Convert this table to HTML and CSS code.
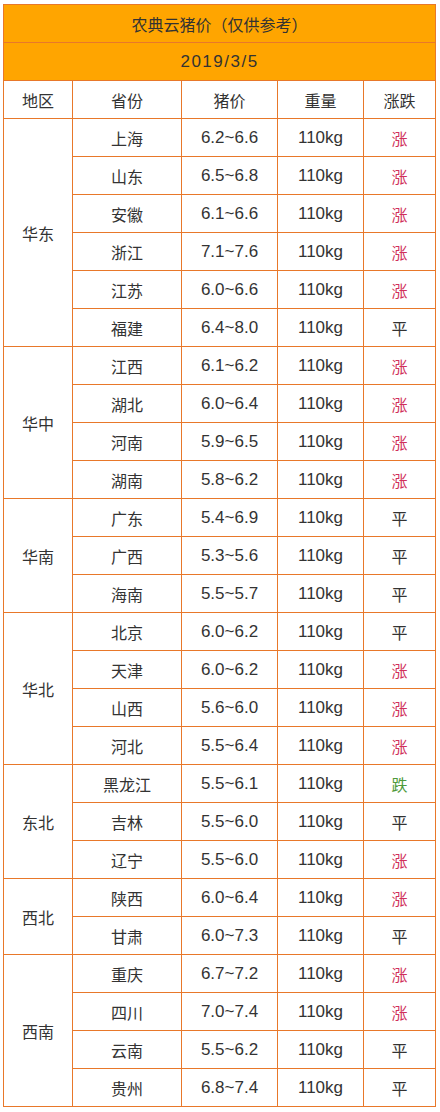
FILE: index.html
```html
<!DOCTYPE html>
<html lang="zh">
<head>
<meta charset="utf-8">
<link rel="stylesheet" href="styles.css">
</head>
<body>
<table class="price">
<colgroup><col class="c1"><col class="c2"><col class="c3"><col class="c4"><col class="c5"></colgroup>
<tr class="band"><td colspan="5">农典云猪价（仅供参考）</td></tr>
<tr class="band date"><td colspan="5">2019/3/5</td></tr>
<tr class="head"><td>地区</td><td>省份</td><td>猪价</td><td>重量</td><td>涨跌</td></tr>
<tr><td rowspan="6">华东</td><td>上海</td><td>6.2~6.6</td><td>110kg</td><td class="up">涨</td></tr>
<tr><td>山东</td><td>6.5~6.8</td><td>110kg</td><td class="up">涨</td></tr>
<tr><td>安徽</td><td>6.1~6.6</td><td>110kg</td><td class="up">涨</td></tr>
<tr><td>浙江</td><td>7.1~7.6</td><td>110kg</td><td class="up">涨</td></tr>
<tr><td>江苏</td><td>6.0~6.6</td><td>110kg</td><td class="up">涨</td></tr>
<tr><td>福建</td><td>6.4~8.0</td><td>110kg</td><td>平</td></tr>
<tr><td rowspan="4">华中</td><td>江西</td><td>6.1~6.2</td><td>110kg</td><td class="up">涨</td></tr>
<tr><td>湖北</td><td>6.0~6.4</td><td>110kg</td><td class="up">涨</td></tr>
<tr><td>河南</td><td>5.9~6.5</td><td>110kg</td><td class="up">涨</td></tr>
<tr><td>湖南</td><td>5.8~6.2</td><td>110kg</td><td class="up">涨</td></tr>
<tr><td rowspan="3">华南</td><td>广东</td><td>5.4~6.9</td><td>110kg</td><td>平</td></tr>
<tr><td>广西</td><td>5.3~5.6</td><td>110kg</td><td>平</td></tr>
<tr><td>海南</td><td>5.5~5.7</td><td>110kg</td><td>平</td></tr>
<tr><td rowspan="4">华北</td><td>北京</td><td>6.0~6.2</td><td>110kg</td><td>平</td></tr>
<tr><td>天津</td><td>6.0~6.2</td><td>110kg</td><td class="up">涨</td></tr>
<tr><td>山西</td><td>5.6~6.0</td><td>110kg</td><td class="up">涨</td></tr>
<tr><td>河北</td><td>5.5~6.4</td><td>110kg</td><td class="up">涨</td></tr>
<tr><td rowspan="3">东北</td><td>黑龙江</td><td>5.5~6.1</td><td>110kg</td><td class="down">跌</td></tr>
<tr><td>吉林</td><td>5.5~6.0</td><td>110kg</td><td>平</td></tr>
<tr><td>辽宁</td><td>5.5~6.0</td><td>110kg</td><td class="up">涨</td></tr>
<tr><td rowspan="2">西北</td><td>陕西</td><td>6.0~6.4</td><td>110kg</td><td class="up">涨</td></tr>
<tr><td>甘肃</td><td>6.0~7.3</td><td>110kg</td><td>平</td></tr>
<tr><td rowspan="4">西南</td><td>重庆</td><td>6.7~7.2</td><td>110kg</td><td class="up">涨</td></tr>
<tr><td>四川</td><td>7.0~7.4</td><td>110kg</td><td class="up">涨</td></tr>
<tr><td>云南</td><td>5.5~6.2</td><td>110kg</td><td>平</td></tr>
<tr><td>贵州</td><td>6.8~7.4</td><td>110kg</td><td>平</td></tr>
</table>
</body>
</html>
```
FILE: styles.css
```css
html, body {
  margin: 0;
  padding: 0;
  background: #ffffff;
}
body {
  padding: 4px 0 0 3px;
  font-family: "Liberation Sans", "Noto Sans CJK SC", sans-serif;
  color: #333333;
}
.price {
  border-collapse: collapse;
  table-layout: fixed;
  width: 433px;
  font-size: 16px;
}
.c1 { width: 69px; }
.c2 { width: 109px; }
.c3 { width: 96px; }
.c4 { width: 86px; }
.c5 { width: 72px; }
.price td {
  border: 1px solid #e8782a;
  height: 38px;
  padding: 0;
  text-align: center;
  vertical-align: middle;
  box-sizing: border-box;
}
.band td {
  background: #ffa500;
}
.date td {
  font-size: 17px;
  letter-spacing: 1.5px;
}
.price tr:not(.head):not(.band) td:nth-last-child(2),
.price tr:not(.head):not(.band) td:nth-last-child(3) {
  font-size: 17px;
}
.price .up { color: #d0305a; }
.price .down { color: #4e9a3a; }
```
